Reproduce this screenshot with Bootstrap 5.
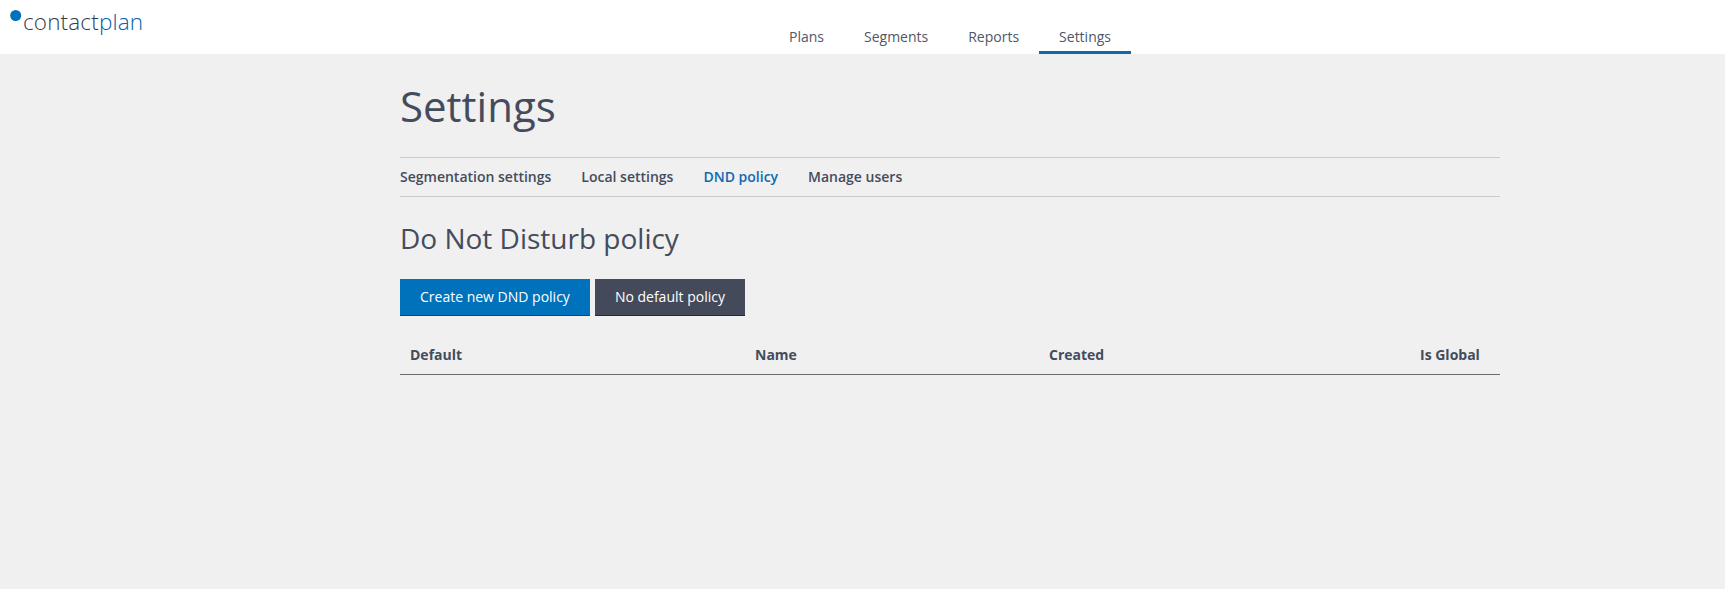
<!DOCTYPE html>
<html lang="en">
<head>
<meta charset="utf-8">
<meta name="viewport" content="width=device-width, initial-scale=1">
<title>contactplan - Settings</title>
<link rel="stylesheet" href="https://cdn.jsdelivr.net/npm/bootstrap@5.3.0/dist/css/bootstrap.min.css">
<style>
body{font-family:"Open Sans",sans-serif;font-size:14px;line-height:20px;color:#444c5c;background:#f0f0f0}
.topbar{height:54px;background:#fff}
.brand{width:769px;padding:10px 0 0 10px}
.brand svg{display:block}
.brand-text{margin:0 0 0 1px;font-size:22.5px;line-height:24px;font-weight:300;letter-spacing:.15px;color:#343c4c}
.brand-text span{color:#0062aa}
.topbar .nav-link{height:54px;padding:27px 20px 0;color:#505767;line-height:20px;border-bottom:3px solid transparent}
.topbar .nav-link.active{border-color:#1069a8}
.page{width:1100px;margin-left:400px}
h1{font-size:42px;line-height:50px;font-weight:400;margin:27px 0 26px}
.subnav{height:40px;border-top:1px solid #c9cbd0;border-bottom:1px solid #c9cbd0;gap:30px}
.subnav .nav-link{padding:0;color:#444c5c;font-weight:600}
.subnav .nav-link.active{color:#1069b0}
h2{font-size:28px;line-height:36px;font-weight:400;margin:23px 0 23px}
.action{height:37px;padding:0 20px;border:0;border-bottom:1px solid;border-radius:0;font-size:14px;line-height:34px;color:#fff}
.action-new{background:#0072bc;border-color:#064574}
.action-none{background:#444a5a;border-color:#23283a}
.actions{gap:5px}
.policies{table-layout:fixed;margin:18px 0 0;--bs-table-bg:transparent}
.policies th{height:40px;padding:10px 10px 9px;line-height:20px;font-weight:700;color:#444c5c;border-bottom:1px solid #666c72}
</style>
</head>
<body>
<header class="topbar d-flex">
  <a class="brand d-flex align-items-start text-decoration-none" href="#">
    <svg width="12" height="12" aria-hidden="true"><circle cx="5.7" cy="5.5" r="5.5" fill="#0072bc"/></svg>
    <div class="brand-text">contact<span>plan</span></div>
  </a>
  <nav class="nav flex-nowrap">
    <a class="nav-link" href="#">Plans</a>
    <a class="nav-link" href="#">Segments</a>
    <a class="nav-link" href="#">Reports</a>
    <a class="nav-link active" href="#">Settings</a>
  </nav>
</header>
<main class="page">
  <h1>Settings</h1>
  <nav class="subnav nav align-items-center">
    <a class="nav-link" href="#">Segmentation settings</a>
    <a class="nav-link" href="#">Local settings</a>
    <a class="nav-link active" href="#">DND policy</a>
    <a class="nav-link" href="#">Manage users</a>
  </nav>
  <h2>Do Not Disturb policy</h2>
  <div class="actions d-flex">
    <button class="btn action action-new" type="button">Create new DND policy</button>
    <button class="btn action action-none" type="button">No default policy</button>
  </div>
  <table class="table policies">
    <colgroup><col style="width:345px"><col style="width:294px"><col style="width:371px"><col></colgroup>
    <thead><tr><th>Default</th><th>Name</th><th>Created</th><th>Is Global</th></tr></thead>
  </table>
</main>
<script src="https://cdn.jsdelivr.net/npm/bootstrap@5.3.0/dist/js/bootstrap.bundle.min.js"></script>
</body>
</html>
